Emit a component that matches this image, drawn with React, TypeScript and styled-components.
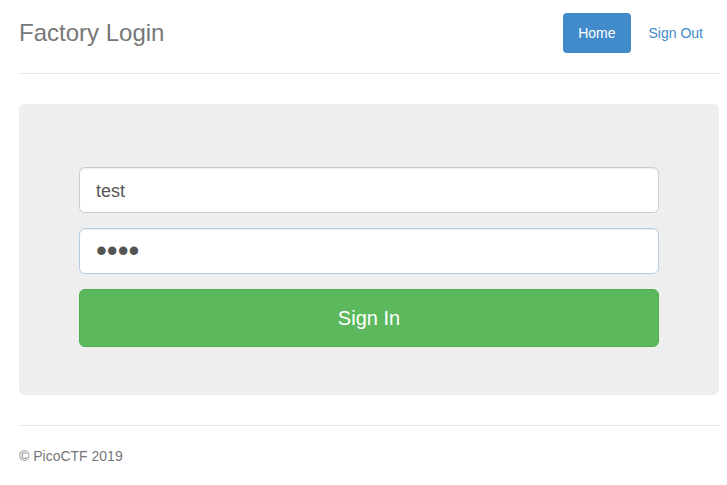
import React from "react";
import styled, { createGlobalStyle } from "styled-components";

const GlobalStyle = createGlobalStyle`
  html, body {
    margin: 0;
    padding: 0;
    background: #fff;
    font-family: "Liberation Sans", Arial, sans-serif;
    font-size: 14px;
    color: #333;
  }
`;

const Page = styled.div`
  padding: 13px 8px 0 19px;
`;

const Header = styled.header`
  display: flex;
  align-items: center;
  justify-content: space-between;
  padding-bottom: 20px;
  border-bottom: 1px solid #e5e5e5;
`;

const Title = styled.h3`
  margin: 0;
  font-size: 24px;
  font-weight: 400;
  line-height: 40px;
  color: #777;
`;

const Nav = styled.nav`
  display: flex;
  gap: 3px;
  margin-right: 1px;
`;

const NavLink = styled.a<{ $active?: boolean }>`
  display: block;
  padding: 0 15px;
  line-height: 40px;
  border-radius: 4px;
  font-size: 14px;
  text-decoration: none;
  color: ${(p) => (p.$active ? "#fff" : "#428bca")};
  background: ${(p) => (p.$active ? "#428bca" : "transparent")};
`;

const Jumbotron = styled.section`
  margin-top: 30px;
  height: 291px;
  box-sizing: border-box;
  padding: 63px 60px 0;
  background: #eee;
  border-radius: 6px;
`;

const Form = styled.form`
  display: flex;
  flex-direction: column;
  gap: 15px;
  margin: 0;
`;

const Input = styled.input<{ $secret?: boolean }>`
  box-sizing: border-box;
  width: 100%;
  height: 46px;
  padding: ${(p) => (p.$secret ? "0 16px 1px" : "11px 16px 9px")};
  font-family: inherit;
  font-size: ${(p) => (p.$secret ? "31px" : "18px")};
  color: #555;
  background: #fff;
  border: 1px solid ${(p) => (p.$secret ? "#b7cbe0" : "#ccc")};
  border-radius: 6px;
  box-shadow: inset 0 1px 1px rgba(0, 0, 0, 0.075);
  outline: none;
`;

const SubmitButton = styled.button`
  height: 58px;
  width: 100%;
  font-family: inherit;
  font-size: 20px;
  color: #fff;
  background: #5cb85c;
  border: 1px solid #4cae4c;
  border-radius: 6px;
`;

const Footer = styled.footer`
  margin-top: 30px;
  padding-top: 20px;
  border-top: 1px solid #e5e5e5;
  font-size: 14px;
  line-height: 20px;
  color: #777;
`;

export default function App() {
  return (
    <>
      <GlobalStyle />
      <Page>
        <Header>
          <Title>Factory Login</Title>
          <Nav>
            <NavLink href="#" $active>
              Home
            </NavLink>
            <NavLink href="#">Sign Out</NavLink>
          </Nav>
        </Header>
        <Jumbotron>
          <Form onSubmit={(e) => e.preventDefault()}>
            <Input type="text" defaultValue="test" />
            <Input type="password" defaultValue="test" $secret />
            <SubmitButton type="submit">Sign In</SubmitButton>
          </Form>
        </Jumbotron>
        <Footer>© PicoCTF 2019</Footer>
      </Page>
    </>
  );
}
